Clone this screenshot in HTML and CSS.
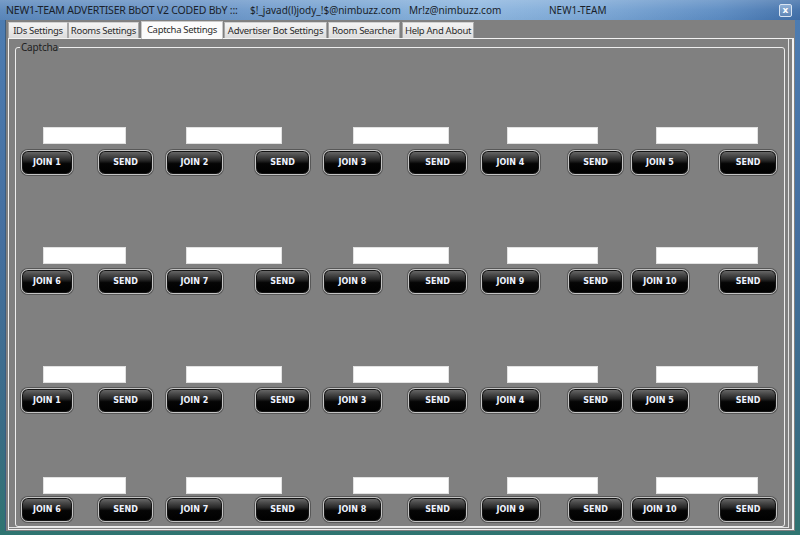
FILE: index.html
```html
<!DOCTYPE html>
<html>
<head>
<meta charset="utf-8">
<link rel="stylesheet" href="styles.css">
</head>
<body>
<div class="window">
  <div class="titlebar">
    <span class="title t1">NEW1-TEAM ADVERTISER BbOT V2 CODED BbY :::</span>
    <span class="title t2">$!_javad(l)jody_!$@nimbuzz.com</span>
    <span class="title t3">Mr!z@nimbuzz.com</span>
    <span class="title t4">NEW1-TEAM</span>
    <span class="close">x</span>
  </div>
  <div class="client">
    <div class="tabs">
      <div class="tab tab1">IDs Settings</div>
      <div class="tab tab2">Rooms Settings</div>
      <div class="tab tab3 active">Captcha Settings</div>
      <div class="tab tab4">Advertiser Bot Settings</div>
      <div class="tab tab5">Room Searcher</div>
      <div class="tab tab6">Help And About</div>
    </div>
    <div class="tabpage">
      <div class="group">
        <span class="legend">Captcha</span>

        <div class="row r1">
          <div class="inputs"><div class="box"></div><div class="box"></div><div class="box"></div><div class="box"></div><div class="box"></div></div>
          <div class="buttons">
            <span class="btn">JOIN 1</span><span class="btn">SEND</span>
            <span class="btn">JOIN 2</span><span class="btn">SEND</span>
            <span class="btn">JOIN 3</span><span class="btn">SEND</span>
            <span class="btn">JOIN 4</span><span class="btn">SEND</span>
            <span class="btn">JOIN 5</span><span class="btn">SEND</span>
          </div>
        </div>

        <div class="row r2">
          <div class="inputs"><div class="box"></div><div class="box"></div><div class="box"></div><div class="box"></div><div class="box"></div></div>
          <div class="buttons">
            <span class="btn">JOIN 6</span><span class="btn">SEND</span>
            <span class="btn">JOIN 7</span><span class="btn">SEND</span>
            <span class="btn">JOIN 8</span><span class="btn">SEND</span>
            <span class="btn">JOIN 9</span><span class="btn">SEND</span>
            <span class="btn">JOIN 10</span><span class="btn">SEND</span>
          </div>
        </div>

        <div class="row r3">
          <div class="inputs"><div class="box"></div><div class="box"></div><div class="box"></div><div class="box"></div><div class="box"></div></div>
          <div class="buttons">
            <span class="btn">JOIN 1</span><span class="btn">SEND</span>
            <span class="btn">JOIN 2</span><span class="btn">SEND</span>
            <span class="btn">JOIN 3</span><span class="btn">SEND</span>
            <span class="btn">JOIN 4</span><span class="btn">SEND</span>
            <span class="btn">JOIN 5</span><span class="btn">SEND</span>
          </div>
        </div>

        <div class="row r4">
          <div class="inputs"><div class="box"></div><div class="box"></div><div class="box"></div><div class="box"></div><div class="box"></div></div>
          <div class="buttons">
            <span class="btn">JOIN 6</span><span class="btn">SEND</span>
            <span class="btn">JOIN 7</span><span class="btn">SEND</span>
            <span class="btn">JOIN 8</span><span class="btn">SEND</span>
            <span class="btn">JOIN 9</span><span class="btn">SEND</span>
            <span class="btn">JOIN 10</span><span class="btn">SEND</span>
          </div>
        </div>
      </div>
    </div>
  </div>
</div>
</body>
</html>
```

FILE: styles.css
```css
* { box-sizing: border-box; }
html, body { margin: 0; padding: 0; }
body { width: 800px; height: 535px; overflow: hidden; background: #2f6d6e; }

.window {
  width: 800px;
  height: 535px;
  display: flex;
  flex-direction: column;
  background: linear-gradient(180deg, #4d7db3 0%, #456f9f 45%, #3a6c86 80%, #2f7470 100%);
}

/* title bar */
.titlebar {
  height: 20px;
  display: flex;
  align-items: center;
  padding-left: 6px;
  background:
    linear-gradient(180deg, rgba(255,255,255,0.18) 0%, rgba(255,255,255,0.05) 50%, rgba(0,0,0,0.02) 100%),
    linear-gradient(90deg, #5a87bb 0%, #6893c6 25%, #7aa6d4 45%, #8db6df 60%, #79a5d4 75%, #5b8bc2 90%, #3f6ea8 100%);
  font-family: "Noto Sans", "DejaVu Sans", sans-serif;
  font-size: 10px;
  color: #1a1f2a;
  white-space: nowrap;
}
.title { display: block; line-height: 20px; }
.t1 { width: 244px; letter-spacing: -0.2px; font-size: 10.5px; }
.t2 { width: 159px; }
.t3 { width: 140px; }
.t4 { flex: 1; }
.close {
  width: 13px;
  height: 13px;
  margin-right: 8px;
  margin-top: 1px;
  border: 1px solid #d8e4f2;
  border-radius: 2px;
  background: linear-gradient(180deg, #8fb0d6, #5f86b6);
  color: #fff;
  font-family: "DejaVu Sans", sans-serif;
  font-weight: bold;
  font-size: 9px;
  line-height: 10px;
  text-align: center;
}

/* client area */
.client {
  margin: 0 5px;
  height: 511px;
  background: #808080;
  border-left: 1px solid #3b5d80;
  display: flex;
  flex-direction: column;
}

.tabs {
  height: 17px;
  margin-top: 1px;
  padding-left: 2px;
  display: flex;
  align-items: flex-end;
  font-family: "Noto Sans", "DejaVu Sans", sans-serif;
  font-size: 9.5px;
  letter-spacing: -0.3px;
  color: #2b2b2b;
  position: relative;
  z-index: 1;
}
.tab {
  height: 16px;
  line-height: 15px;
  text-align: center;
  white-space: nowrap;
  background: linear-gradient(180deg, #f4f4f4 0%, #e9e9e9 50%, #dcdcdc 100%);
  border: 1px solid #a8a8a8;
  border-bottom: none;
  border-top-color: #d0d0d0;
}
.tab.active {
  height: 18px;
  margin-bottom: -1px;
  background: #fbfbfb;
  border-color: #c8c8c8;
  line-height: 16px;
}
.tab1 { width: 60px; }
.tab2 { width: 71px; }
.tab3 { width: 82px; margin-left: 2px; }
.tab4 { width: 103px; margin-left: 1px; }
.tab5 { width: 72px; margin-left: 1px; }
.tab6 { width: 72px; margin-left: 2px; }

.tabpage {
  margin-left: 2px;
  width: 786px;
  height: 492px;
  border-style: solid;
  border-color: #f2f2f2;
  border-width: 1px 2px 1px 1px;
  box-shadow: inset -3px -1px 0 #808080, inset -4px -2px 0 #e4e4e4;
}

.group {
  position: relative;
  margin-left: 6px;
  margin-top: 8px;
  width: 770px;
  height: 480px;
  border: 1px solid #ededed;
  border-radius: 3px;
}
.legend {
  position: absolute;
  top: -7px;
  left: 4px;
  padding: 0 1px;
  background: #808080;
  font-family: "Noto Sans", "DejaVu Sans", sans-serif;
  font-size: 10px;
  line-height: 12px;
  letter-spacing: -0.2px;
  color: #1e1e1e;
}

.row { display: flex; flex-direction: column; }
.r1 { margin-top: 79px; }
.r2, .r3 { margin-top: 72px; }
.r4 { margin-top: 64px; }

.inputs { display: flex; height: 17px; }
.box {
  height: 17px;
  background: #fff;
  border: 1px solid #e2e2e2;
}
.box:nth-child(1) { margin-left: 27px; width: 83px; }
.box:nth-child(2) { margin-left: 60px; width: 96px; }
.box:nth-child(3) { margin-left: 71px; width: 96px; }
.box:nth-child(4) { margin-left: 58px; width: 91px; }
.box:nth-child(5) { margin-left: 58px; width: 102px; }

.buttons { display: flex; height: 25px; margin-top: 5px; }
.r1 .buttons { margin-top: 6px; }
.r4 .buttons { margin-top: 3px; }

.btn {
  height: 25px;
  display: flex;
  align-items: center;
  justify-content: center;
  padding-bottom: 1px;
  border: 1px solid #c4c4c4;
  border-radius: 7px;
  background: linear-gradient(180deg, #6e6e6e 0%, #4a4a4a 20%, #262626 42%, #050505 55%, #000 100%);
  box-shadow: inset 0 0 0 1px #141414, 0 0 0 1px rgba(60,60,60,0.6);
  font-family: "DejaVu Sans", "Liberation Sans", sans-serif;
  font-weight: bold;
  font-size: 8px;
  color: #eef3ff;
  white-space: nowrap;
}
.btn:nth-child(1)  { margin-left: 5px;  width: 52px; }
.btn:nth-child(2)  { margin-left: 25px; width: 55px; }
.btn:nth-child(3)  { margin-left: 13px; width: 57px; }
.btn:nth-child(4)  { margin-left: 32px; width: 55px; }
.btn:nth-child(5)  { margin-left: 13px; width: 59px; }
.btn:nth-child(6)  { margin-left: 26px; width: 59px; }
.btn:nth-child(7)  { margin-left: 14px; width: 59px; }
.btn:nth-child(8)  { margin-left: 28px; width: 55px; }
.btn:nth-child(9)  { margin-left: 8px;  width: 58px; }
.btn:nth-child(10) { margin-left: 30px; width: 58px; }
```
